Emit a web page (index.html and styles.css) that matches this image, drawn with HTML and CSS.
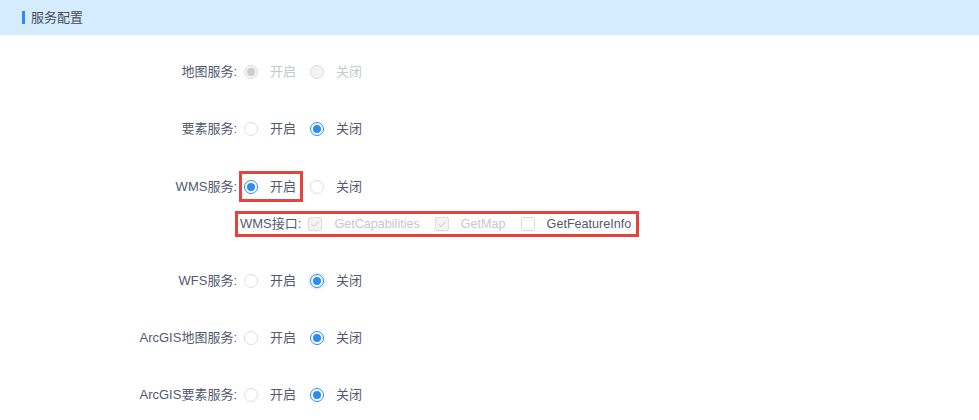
FILE: index.html
```html
<!DOCTYPE html>
<html lang="zh-CN">
<head>
<meta charset="utf-8">
<title>服务配置</title>
<link rel="stylesheet" href="styles.css">
</head>
<body>
  <div class="panel-head">
    <span class="bar"></span>
    <span class="title">服务配置</span>
  </div>
  <div class="form">
    <div class="item">
      <div class="label">地图服务:</div>
      <div class="group">
        <span class="option disabled"><span class="radio checked"></span><span class="text">开启</span></span>
        <span class="option disabled"><span class="radio"></span><span class="text">关闭</span></span>
      </div>
    </div>
    <div class="item item-2">
      <div class="label">要素服务:</div>
      <div class="group">
        <span class="option"><span class="radio"></span><span class="text">开启</span></span>
        <span class="option"><span class="radio checked"></span><span class="text">关闭</span></span>
      </div>
    </div>
    <div class="item-block">
      <div class="item">
        <div class="label">WMS服务:</div>
        <div class="group">
          <span class="option marked"><span class="radio checked"></span><span class="text">开启</span></span>
          <span class="option"><span class="radio"></span><span class="text">关闭</span></span>
        </div>
      </div>
      <div class="sub">
        <div class="sub-box">
          <span class="sub-label">WMS接口:</span>
          <span class="check disabled"><span class="box checked"><svg viewBox="0 0 14 14" width="14" height="14"><path d="M3.5 7.2 L6 9.6 L10.6 4.6" fill="none" stroke="#c5c8ce" stroke-width="1"/></svg></span><span class="text">GetCapabilities</span></span>
          <span class="check disabled"><span class="box checked"><svg viewBox="0 0 14 14" width="14" height="14"><path d="M3.5 7.2 L6 9.6 L10.6 4.6" fill="none" stroke="#c5c8ce" stroke-width="1"/></svg></span><span class="text">GetMap</span></span>
          <span class="check"><span class="box"></span><span class="text">GetFeatureInfo</span></span>
        </div>
      </div>
    </div>
    <div class="item">
      <div class="label">WFS服务:</div>
      <div class="group">
        <span class="option"><span class="radio"></span><span class="text">开启</span></span>
        <span class="option"><span class="radio checked focus"></span><span class="text">关闭</span></span>
      </div>
    </div>
    <div class="item">
      <div class="label">ArcGIS地图服务:</div>
      <div class="group">
        <span class="option"><span class="radio"></span><span class="text">开启</span></span>
        <span class="option"><span class="radio checked"></span><span class="text">关闭</span></span>
      </div>
    </div>
    <div class="item">
      <div class="label">ArcGIS要素服务:</div>
      <div class="group">
        <span class="option"><span class="radio"></span><span class="text">开启</span></span>
        <span class="option"><span class="radio checked"></span><span class="text">关闭</span></span>
      </div>
    </div>
  </div>
</body>
</html>
```
FILE: styles.css
```css
html, body {
  margin: 0;
  padding: 0;
  background: #fff;
}
body {
  font-family: "Liberation Sans", "Noto Sans CJK SC", Arial, sans-serif;
  font-size: 13px;
  color: #515a6e;
  overflow: hidden;
}
.panel-head {
  height: 35px;
  background: #d4ecfd;
  display: flex;
  align-items: center;
  padding-left: 22px;
}
.bar {
  width: 3px;
  height: 13px;
  background: #2d8cf0;
  margin-right: 6px;
}
.title {
  font-size: 13px;
  color: #464c5b;
  line-height: 18px;
}
.form {
  padding-top: 21px;
}
.item {
  display: flex;
  align-items: center;
  height: 32px;
  margin-bottom: 25px;
}
.item.item-2 {
  margin-bottom: 26px;
}
.item-block {
  margin-bottom: 28px;
}
.item-block .item {
  margin-bottom: 0;
}
.label {
  width: 237px;
  text-align: right;
  color: #515a6e;
  line-height: 18px;
}
.group {
  display: flex;
  align-items: center;
  margin-left: 7px;
}
.option {
  display: inline-flex;
  align-items: center;
  margin-right: 14px;
  line-height: 18px;
  height: 18px;
}
.option .text {
  margin-left: 12px;
  color: #515a6e;
}
.option.disabled .text {
  color: #c5c8ce;
}
.radio {
  width: 14px;
  height: 14px;
  box-sizing: border-box;
  border: 1px solid #dcdee2;
  border-radius: 50%;
  background: #fff;
  display: inline-flex;
  align-items: center;
  justify-content: center;
}
.radio.checked {
  border-color: #2d8cf0;
}
.radio.checked::after {
  content: "";
  width: 8px;
  height: 8px;
  border-radius: 50%;
  background: #2d8cf0;
}
.radio.focus {
  box-shadow: 0 0 0 2px rgba(45, 140, 240, 0.12);
}
.option.disabled .radio {
  background: #f3f3f3;
  border-color: #dcdee2;
}
.option.disabled .radio.checked::after {
  background: #cccccc;
}
.marked {
  position: relative;
}
.marked::after {
  content: "";
  position: absolute;
  left: -5px;
  right: -7px;
  top: -7px;
  bottom: -6px;
  border: 3px solid #e5433b;
  pointer-events: none;
}
.sub {
  margin-top: 8px;
  padding-left: 235px;
}
.sub-box {
  display: inline-flex;
  align-items: center;
  height: 26px;
  box-sizing: border-box;
  border: 3px solid #e5433b;
  padding: 0 5px 0 2px;
}
.sub-label {
  color: #515a6e;
  margin-right: 7px;
  line-height: 18px;
}
.check {
  display: inline-flex;
  align-items: center;
  line-height: 18px;
  margin-right: 15px;
}
.check:last-child {
  margin-right: 0;
}
.check .text {
  margin-left: 12px;
  color: #515a6e;
  font-size: 12.6px;
}
.check.disabled .text {
  color: #c5c8ce;
}
.box {
  width: 14px;
  height: 14px;
  box-sizing: border-box;
  border: 1px solid #dcdee2;
  border-radius: 2px;
  background: #fff;
  display: inline-flex;
  align-items: center;
  justify-content: center;
}
.box svg {
  display: block;
  margin: -1px;
}
.check.disabled .box {
  background: #f3f3f3;
}
```
